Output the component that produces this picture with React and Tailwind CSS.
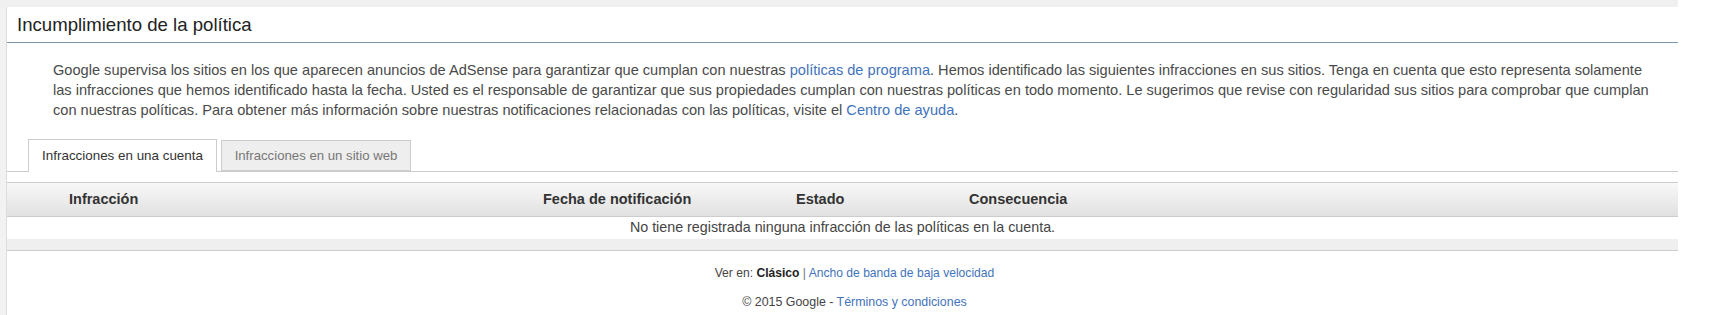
// App.jsx — AdSense policy violations panel
const FONT = 'font-["Liberation_Sans",Arial,sans-serif]';

function Tabs() {
  return (
    <div className="flex items-end pl-[21px] border-b border-[#cccccc] h-[33px] mt-[19px]">
      <div className="w-[189px] h-[33px] bg-white border border-b-0 border-[#cccccc] mb-[-1px] flex items-center justify-center text-[13.4px] text-[#333]">
        Infracciones en una cuenta
      </div>
      <div className="w-[190px] h-[31px] ml-[4px] bg-[#eeeeee] border border-[#cccccc] flex items-center justify-center text-[13.2px] text-[#777]">
        Infracciones en un sitio web
      </div>
    </div>
  );
}

function ViolationsTable() {
  return (
    <div className="mt-[10px]">
      <div className="h-[35px] flex items-center pl-[62px] border-t border-b border-[#cccccc] bg-gradient-to-b from-[#f8f8f8] to-[#e1e1e1] text-[14.5px] font-bold text-[#333]">
        <div className="w-[474px]">Infracción</div>
        <div className="w-[253px]">Fecha de notificación</div>
        <div className="w-[173px]">Estado</div>
        <div>Consecuencia</div>
      </div>
      <div className="h-[22px] flex items-center justify-center text-[14.3px] text-[#444]">
        No tiene registrada ninguna infracción de las políticas en la cuenta.
      </div>
      <div className="h-[12px] bg-[#efefef] border-b border-[#cccccc]" />
    </div>
  );
}

export default function App() {
  return (
    <div className={`w-[1717px] h-[315px] bg-white ${FONT}`}>
      <div className="w-[1678px] h-[7px] bg-[#f0f0f0]" />
      <div className="flex h-[308px]">
        <div className="w-[7px] bg-[#f2f2f2] border-r border-[#dddddd]" />
        <div className="w-[1671px] flex flex-col">
          {/* Title */}
          <div className="h-[36px] flex items-center pl-[10px] border-b border-[#7b97ab] text-[18.6px] text-[#222]">
            Incumplimiento de la política
          </div>

          {/* Intro text */}
          <p className="mt-[17px] pl-[46px] text-[14.6px] leading-[20px] text-[#4a4a4a] whitespace-nowrap">
            Google supervisa los sitios en los que aparecen anuncios de AdSense para garantizar que cumplan con nuestras{' '}
            <span className="text-[#4273bb]">políticas de programa</span>. Hemos identificado las siguientes infracciones en sus sitios. Tenga en cuenta que esto representa solamente
            <br />
            las infracciones que hemos identificado hasta la fecha. Usted es el responsable de garantizar que sus propiedades cumplan con nuestras políticas en todo momento. Le sugerimos que revise con regularidad sus sitios para comprobar que cumplan
            <br />
            con nuestras políticas. Para obtener más información sobre nuestras notificaciones relacionadas con las políticas, visite el{' '}
            <span className="text-[#4273bb]">Centro de ayuda</span>.
          </p>

          <Tabs />
          <ViolationsTable />

          {/* Footer */}
          <div className="pl-[24px] flex flex-col items-center text-[#444] leading-[16px]">
            <div className="mt-[14px] text-[12.1px]">
              Ver en: <span className="font-bold text-[#222]">Clásico</span> <span className="text-[#777]">|</span>{' '}
              <span className="text-[#4273bb]">Ancho de banda de baja velocidad</span>
            </div>
            <div className="mt-[13px] text-[12.4px]">
              © 2015 Google - <span className="text-[#4273bb]">Términos y condiciones</span>
            </div>
          </div>
        </div>
      </div>
    </div>
  );
}
